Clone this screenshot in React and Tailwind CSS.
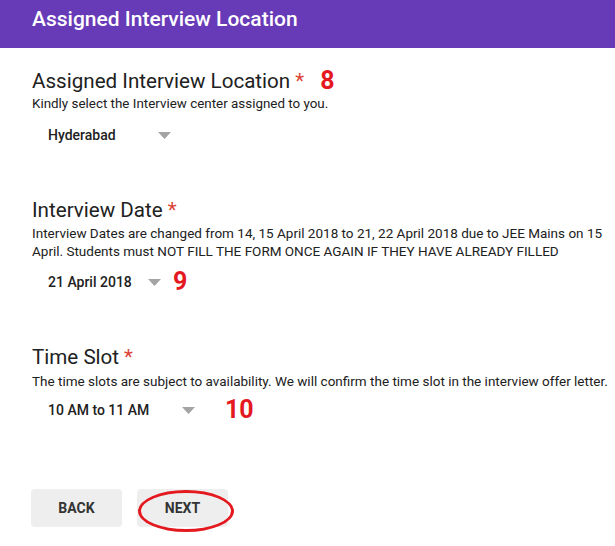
import React from 'react';

// Small grey dropdown arrow used by the select rows
const Caret = () => (
  <svg width="13" height="7" viewBox="0 0 13 7">
    <path d="M0 0 L13 0 L6.5 7 Z" fill="#a4a4a4" />
  </svg>
);

// Red hand-written annotation number
const Mark = ( { children, className } ) => (
  <span className={ `text-[25px] leading-6 font-bold text-[#e3191f] ${ className }` }>{ children }</span>
);

const Star = () => <span className="text-[#db4437] ml-[5px]">*</span>;

const App = () =>
{
  return (
    <div className="w-[615px] h-[546px] bg-white overflow-hidden font-['Roboto',sans-serif] text-[#212121]">
      {/* Purple header band */ }
      <div className="h-12 bg-[#673ab7] pl-[32px] pt-[7px]">
        <h1 className="text-white text-[21px] font-medium leading-6">
          Assigned Interview Location
        </h1>
      </div>

      <div className="pl-[32px] pr-[4px]">
        {/* Location */ }
        <div className="mt-[21px] flex items-center h-6 text-[20.6px]">
          <span>Assigned Interview Location</span>
          <Star />
          <Mark className="ml-4">8</Mark>
        </div>
        <p className="mt-[3px] text-[13.4px] leading-4">Kindly select the Interview center assigned to you.</p>
        <div className="mt-[11px] h-6 flex items-center pl-[16px]">
          <span className="text-[14px] font-medium w-[110px]">Hyderabad</span>
          <Caret />
        </div>

        {/* Date */ }
        <div className="mt-[51px] flex items-center h-6 text-[20.6px]">
          <span>Interview Date</span>
          <Star />
        </div>
        <p className="mt-[2px] text-[13.5px] leading-[18px]">
          Interview Dates are changed from 14, 15 April 2018 to 21, 22 April 2018 due to JEE Mains on 15 April. Students must NOT FILL THE FORM ONCE AGAIN IF THEY HAVE ALREADY FILLED
        </p>
        <div className="mt-[10px] h-6 flex items-center pl-[16px]">
          <span className="text-[14px] font-medium w-[100px]">21 April 2018</span>
          <Caret />
          <Mark className="ml-3">9</Mark>
        </div>

        {/* Time slot */ }
        <div className="mt-[51px] flex items-center h-6 text-[20.6px]">
          <span>Time Slot</span>
          <Star />
        </div>
        <p className="mt-[4px] text-[13.5px] leading-4 whitespace-nowrap">
          The time slots are subject to availability. We will confirm the time slot in the interview offer letter.
        </p>
        <div className="mt-[9px] h-6 flex items-center pl-[16px]">
          <span className="text-[14px] font-medium w-[134px]">10 AM to 11 AM</span>
          <Caret />
          <Mark className="ml-[30px]">10</Mark>
        </div>

        {/* Navigation buttons */ }
        <div className="mt-[67px] flex gap-[15px] -ml-px">
          <button className="w-[91px] h-[38px] rounded bg-[#eeeeee] text-[14px] font-bold text-[#333]">BACK</button>
          <div className="relative">
            <button className="w-[91px] h-[38px] rounded bg-[#eeeeee] text-[14px] font-bold text-[#333]">NEXT</button>
            <div className="absolute left-[1px] top-[1px] w-[96px] h-[42px] rounded-[50%] border-[3px] border-[#e3191f]" />
          </div>
        </div>
      </div>
    </div>
  );
};

export default App;
